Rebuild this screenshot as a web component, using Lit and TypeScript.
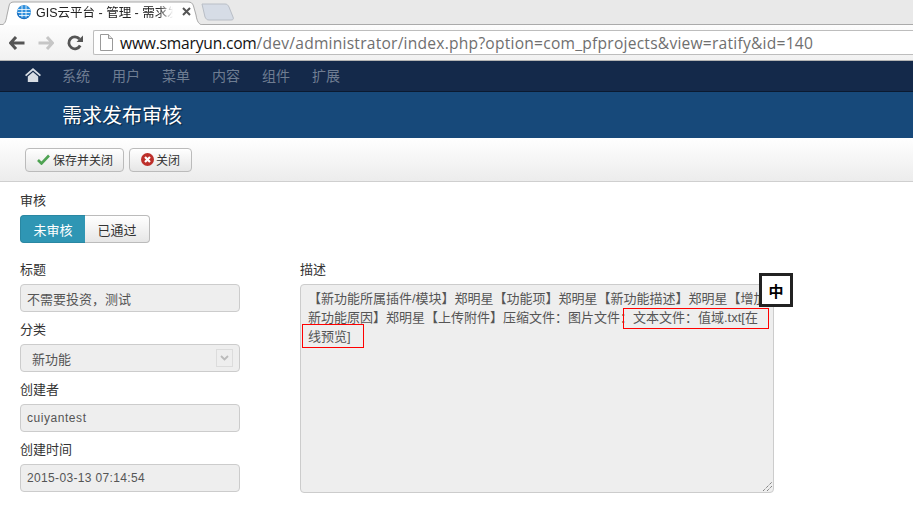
import { LitElement, html, css } from "lit";
import { customElement } from "lit/decorators.js";

const NAV = ["系统", "用户", "菜单", "内容", "组件", "扩展"];

@customElement("app-root")
export class AppRoot extends LitElement {
  static styles = css`
    :host { display: block; width: 913px; height: 515px; overflow: hidden; background: #fff; color: #333;
      font-family: "Liberation Sans", "Noto Sans CJK SC", sans-serif; font-size: 13px; }
    * { box-sizing: border-box; }
    .strip { height: 25px; background: #e9e9e9; border-bottom: 1px solid #aaa; display: flex; align-items: flex-end; }
    .tab { position: relative; width: 204px; height: 24px; display: flex; align-items: center; padding: 0 0 3px 16px; margin-bottom: -1px; }
    .tab-bg { position: absolute; left: 0; top: 0; }
    .favicon, .tab-title, .tab-x { position: relative; }
    .favicon { flex: none; }
    .tab-title { width: 140px; margin-left: 4px; white-space: nowrap; font-size: 12.5px; color: #222;
      -webkit-mask-image: linear-gradient(90deg, #000 122px, transparent 137px); mask-image: linear-gradient(90deg, #000 122px, transparent 137px); }
    .tab-x { margin-left: 6px; width: 9px; height: 9px; display: block; }
    .newtab { width: 34px; height: 18px; margin: 0 0 3px -3px; display: block; }
    .bar { height: 36px; background: linear-gradient(#fdfdfd, #f1f1f1); border-bottom: 1px solid #b4b4b4; display: flex; align-items: center; padding-left: 9px; }
    .bar svg { display: block; flex: none; }
    .fwd { margin-left: 13px; }
    .reload { margin-left: 13px; }
    .url { margin-left: 10px; flex: 1; height: 25px; background: #fff; border: 1px solid #bdbdbd; border-right: 0; border-radius: 2px 0 0 2px; display: flex; align-items: center; padding-left: 6px; }
    .url-text { margin-left: 7px; font-family: "Open Sans", sans-serif; font-size: 15.6px; letter-spacing: 0.23px; color: #6f6f6f; white-space: nowrap; }
    .url-text b { font-weight: 400; color: #111; letter-spacing: -0.2px; }
    .nav { height: 31px; background: #14294a; border-bottom: 1px solid #0b1a30; display: flex; align-items: center; padding: 0 0 2px 25px; }
    .home { display: block; margin-right: 21px; }
    .nav-item { width: 50px; font-size: 14px; color: #6f7d92; flex: none; }
    .head { height: 46px; background: #17497a; display: flex; align-items: center; padding: 0 0 2px 62px; }
    .head h1 { margin: 0; font-size: 20px; font-weight: 400; color: #fff; text-shadow: 1px 1px 1px #06223f; }
    .tools { height: 44px; background: linear-gradient(#fff, #ececec); border-bottom: 1px solid #cfcfcf; display: flex; align-items: center; gap: 5px; padding: 0 0 0 25px; }
    .btn { height: 24px; border: 1px solid #bbb; border-radius: 4px; background: linear-gradient(#fff, #e6e6e6); display: flex; align-items: center; gap: 3px; font-size: 12px; color: #333; }
    .btn-save { width: 99px; padding-left: 11px; }
    .btn-close { width: 63px; padding-left: 11px; gap: 2px; }
    .main { padding: 10px 20px 0; }
    .label { display: block; height: 18px; line-height: 18px; font-size: 13px; color: #333; }
    .radio { display: flex; width: 130px; height: 28px; margin-top: 5px; margin-bottom: 18px; }
    .opt { width: 65px; display: flex; align-items: center; justify-content: center; border: 1px solid #bbb; font-size: 13px; color: #333; background: linear-gradient(#fff, #e6e6e6); }
    .opt.on { color: #fff; background: #2f96b4; border-color: #2a87a2; border-radius: 4px 0 0 4px; border-right: 0; }
    .opt.off { border-left: 0; border-radius: 0 4px 4px 0; }
    .cols { display: flex; gap: 60px; }
    .left { width: 220px; }
    .right { width: 474px; }
    .field { height: 28px; margin-top: 5px; margin-bottom: 9px; background: #eee; border: 1px solid #ccc; border-radius: 4px; display: flex; align-items: center; padding: 0 6px; font-size: 13px; color: #555; }
    .field.latin { font-size: 12px; letter-spacing: 0.35px; }
    .field.user { letter-spacing: 0.55px; }
    .field.select { padding: 0 6px 0 11px; justify-content: space-between; }
    .chev { width: 17px; height: 18px; border: 1px solid #dcdcdc; background: #eee; display: flex; align-items: center; justify-content: center; }
    .desc { position: relative; height: 209px; margin-top: 5px; background: #eee; border: 1px solid #ccc; border-radius: 4px; padding: 4px 7px; font-size: 13px; line-height: 19px; color: #555; overflow: hidden; }
    .line { display: block; white-space: nowrap; }
    .hl { position: absolute; border: 1px solid #f00; }
    .hl-a { left: 322px; top: 23px; width: 146px; height: 21px; }
    .hl-b { left: 1px; top: 39px; width: 62px; height: 24px; }
    .ime { position: absolute; left: 759px; top: 273px; width: 34px; height: 34px; background: #fff; border: 3px solid #222; display: flex; align-items: center; justify-content: center; font-size: 15px; font-weight: 700; color: #000; }
    .grip { position: absolute; right: 1px; bottom: 1px; display: block; }
  `;

  render() {
    return html`
      <div class="strip">
        <div class="tab">
          <svg class="tab-bg" width="204" height="24" viewBox="0 0 204 24"><path d="M0.5 24C5 24 6 20 7 14L9 5C9.5 2 11 1 14 1H188C191 1 192.500 2 193.500 5L196 14C197 20 198.500 24 203.500 24" fill="#fff" stroke="#a8a8a8"/></svg>
          <svg class="favicon" width="16" height="16" viewBox="0 0 16 16"><circle cx="8" cy="8" r="7" fill="#2f8fdc"/><path d="M1.500 8a6.500 6.500 0 0 0 11 4.500" fill="none" stroke="#1b6fc0" stroke-width="1.500"/><path d="M2 5.500h12M1.500 8.500h13M3 11.500h10M6 1.500v12M10 1.500v12" stroke="#fff" stroke-width=".8" fill="none"/></svg>
          <span class="tab-title">GIS云平台 - 管理 - 需求发</span>
          <svg class="tab-x" viewBox="0 0 9 9"><path d="M1 1l7 7M8 1L1 8" stroke="#555" stroke-width="2"/></svg>
        </div>
        <svg class="newtab" viewBox="0 0 34 18"><path d="M1 1H24C26 1 27 2 28 4L32 14C33 16 32 17 30 17H8C6 17 5 16 4 14Z" fill="#d6dce6" stroke="#b9bec6"/></svg>
      </div>
      <div class="bar">
        <svg width="16" height="14" viewBox="0 0 16 14"><path d="M7 1L1.500 7 7 13M2 7h13.500" fill="none" stroke="#555" stroke-width="3"/></svg>
        <svg class="fwd" width="16" height="14" viewBox="0 0 16 14"><path d="M9 1l5.500 6L9 13M14 7H.5" fill="none" stroke="#c6c6c6" stroke-width="3"/></svg>
        <svg class="reload" width="16" height="16" viewBox="0 0 16 16"><path d="M13.200 10.500A6 6 0 1 1 12.500 4" fill="none" stroke="#555" stroke-width="2.800"/><path d="M9.500 7H16V0.500Z" fill="#555"/></svg>
        <div class="url">
          <svg width="13" height="17" viewBox="0 0 13 17"><path d="M.5.5H8.500L12.500 4.500V16.500H.5Z" fill="#fff" stroke="#999"/><path d="M8.500.5V4.500H12.500" fill="#e4e4e4" stroke="#999"/></svg>
          <span class="url-text"><b>www.smaryun.com</b>/dev/administrator/index.php?option=com_pfprojects&amp;view=ratify&amp;id=140</span>
        </div>
      </div>
      <nav class="nav">
        <svg class="home" width="16" height="14" viewBox="0 0 16 14"><path d="M8 0L0 7l1.200 1.300L8 2.500l6.800 5.800L16 7Z" fill="#d8dde4"/><path d="M2.800 8.500L8 4l5.200 4.500V14H2.800Z" fill="#d8dde4"/></svg>
        ${NAV.map((n) => html`<span class="nav-item">${n}</span>`)}
      </nav>
      <header class="head"><h1>需求发布审核</h1></header>
      <div class="tools">
        <div class="btn btn-save">
          <svg width="13" height="11" viewBox="0 0 13 11"><path d="M1 6l3.500 3.500L12 1.500" fill="none" stroke="#4fa353" stroke-width="2.600"/></svg>
          <span>保存并关闭</span>
        </div>
        <div class="btn btn-close">
          <svg width="13" height="13" viewBox="0 0 13 13"><circle cx="6.500" cy="6.500" r="6.500" fill="#bd2f2a"/><path d="M4 4l5 5M9 4L4 9" stroke="#fff" stroke-width="2.200"/></svg>
          <span>关闭</span>
        </div>
      </div>
      <main class="main">
        <span class="label">审核</span>
        <div class="radio"><div class="opt on">未审核</div><div class="opt off">已通过</div></div>
        <div class="cols">
          <div class="left">
            <span class="label">标题</span>
            <div class="field">不需要投资，测试</div>
            <span class="label">分类</span>
            <div class="field select">
              <span>新功能</span>
              <span class="chev"><svg width="9" height="6" viewBox="0 0 9 6"><path d="M1 1l3.500 3.500L8 1" fill="none" stroke="#bbb" stroke-width="1.800"/></svg></span>
            </div>
            <span class="label">创建者</span>
            <div class="field latin user">cuiyantest</div>
            <span class="label">创建时间</span>
            <div class="field latin">2015-03-13 07:14:54</div>
          </div>
          <div class="right">
            <span class="label">描述</span>
            <div class="desc">
              <span class="line">【新功能所属插件/模块】郑明星【功能项】郑明星【新功能描述】郑明星【增加</span>
              <span class="line">新功能原因】郑明星【上传附件】压缩文件：图片文件：文本文件：值域.txt[在</span>
              <span class="line">线预览]</span>
              <span class="hl hl-a"></span>
              <span class="hl hl-b"></span>
              <svg class="grip" width="9" height="9" viewBox="0 0 9 9"><path d="M0 9L9 0M4 9L9 4" stroke="#555" stroke-dasharray="1 1"/></svg>
            </div>
          </div>
        </div>
      </main>
      <div class="ime">中</div>
    `;
  }
}
